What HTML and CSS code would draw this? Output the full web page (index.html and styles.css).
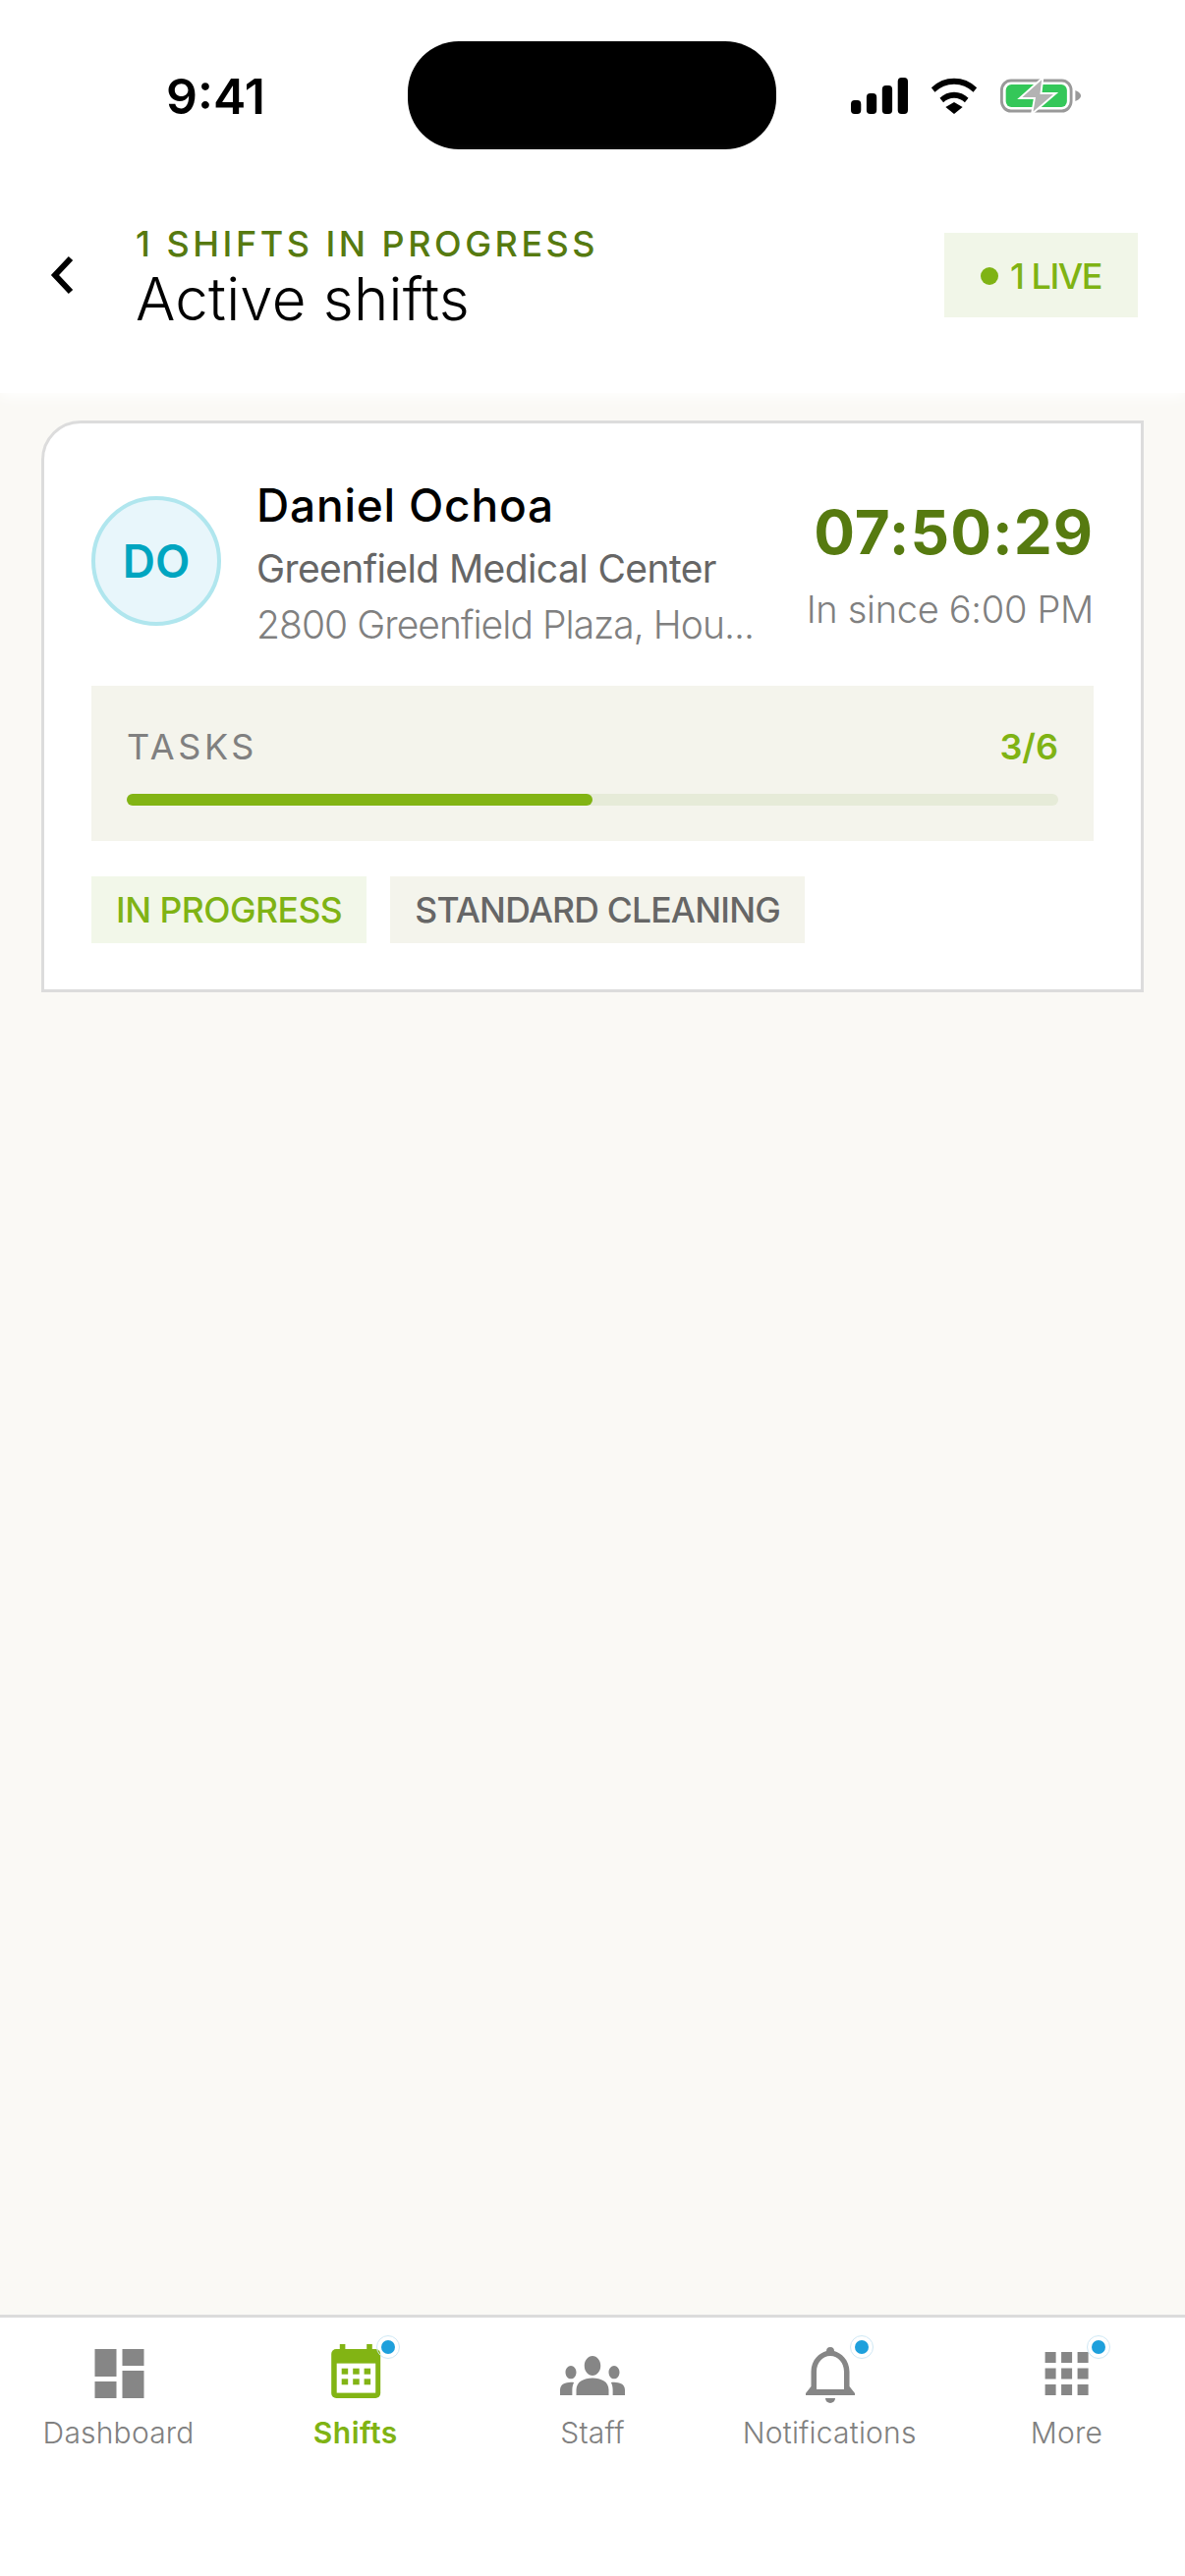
FILE: index.html
```html
<!DOCTYPE html>
<html>
	<head>
		<meta charset="UTF-8">
		<title>Active shifts</title>
		<link rel="stylesheet" href="styles.css">
	</head>
	<body>
		<div class="app">
			<div class="status-bar">
				<div class="status-time">9:41</div>
				<div class="island"></div>
				<div class="status-icons">
					<svg width="58" height="37" viewBox="0 0 62 37" preserveAspectRatio="none" fill="#000">
						<rect x="0" y="23" width="11" height="14" rx="4"/>
						<rect x="17" y="16" width="11" height="21" rx="4"/>
						<rect x="34" y="8" width="11" height="29" rx="4"/>
						<rect x="51" y="0" width="11" height="37" rx="4"/>
					</svg>
					<svg width="50" height="37" viewBox="0 0 55 37" preserveAspectRatio="none">
						<path d="M4 12.5A36 36 0 0 1 51 12.5" fill="none" stroke="#000" stroke-width="6"/>
						<path d="M13.5 23A21 21 0 0 1 41.5 23" fill="none" stroke="#000" stroke-width="6"/>
						<polygon points="18,30 27.5,25 37,30 27.5,37" fill="#000"/>
					</svg>
					<svg width="82" height="39" viewBox="0 0 87 39" preserveAspectRatio="none">
						<rect x="1.5" y="4" width="75" height="31" rx="10" fill="none" stroke="#999" stroke-width="3"/>
						<rect x="6" y="8" width="66" height="23" rx="6" fill="#34c759"/>
						<path d="M81 14C84 15 87 17 87 19.5C87 22 84 24 81 25Z" fill="#999"/>
						<polygon points="46,1 21,22 37,22 34,38 60,17 44,17" fill="#b3b3b3" stroke="#fff" stroke-width="2"/>
					</svg>
				</div>
			</div>

			<div class="header">
				<a class="back">
					<svg width="26" height="40" viewBox="0 0 26 40"><path d="M22 3L6 20L22 37" fill="none" stroke="#000" stroke-width="6"/></svg>
				</a>
				<div class="header-text">
					<div class="header-sub">1 SHIFTS IN PROGRESS</div>
					<div class="header-title">Active shifts</div>
				</div>
				<div class="live"><span class="live-dot"></span>1 LIVE</div>
			</div>

			<div class="main">
				<div class="card">
					<div class="card-top">
						<div class="avatar">DO</div>
						<div class="info">
							<div class="info-name">Daniel Ochoa</div>
							<div class="info-place">Greenfield Medical Center</div>
							<div class="info-addr">2800 Greenfield Plaza, Hou...</div>
						</div>
						<div class="clock">
							<div class="clock-time">07:50:29</div>
							<div class="clock-since">In since 6:00 PM</div>
						</div>
					</div>
					<div class="tasks">
						<div class="tasks-head">
							<span class="tasks-label">TASKS</span>
							<span class="tasks-count">3/6</span>
						</div>
						<div class="bar"><div class="bar-fill" style="width: 50%"></div></div>
					</div>
					<div class="tags">
						<span class="tag tag-green">IN PROGRESS</span>
						<span class="tag">STANDARD CLEANING</span>
					</div>
				</div>
			</div>

			<div class="tabbar">
				<div class="tab">
					<div class="tab-icon">
						<svg width="72" height="60" viewBox="0 0 72 60" fill="#868686">
							<rect x="11.5" y="5" width="22" height="28"/>
							<rect x="11.5" y="38" width="22" height="17"/>
							<rect x="39.5" y="5" width="22" height="17"/>
							<rect x="39.5" y="27" width="22" height="28"/>
						</svg>
					</div>
					<div class="tab-label">Dashboard</div>
				</div>
				<div class="tab tab-active">
					<div class="tab-icon">
						<svg width="72" height="60" viewBox="0 0 72 60" fill="#82b414">
							<rect x="19.8" y="0" width="5.6" height="8"/>
							<rect x="47.2" y="0" width="5.6" height="8"/>
							<rect x="11.2" y="5" width="50" height="50" rx="5"/>
							<rect x="16.7" y="19.6" width="39.5" height="30" fill="#fff"/>
							<rect x="21.7" y="24.7" width="6.5" height="6"/>
							<rect x="33.2" y="24.7" width="6.5" height="6"/>
							<rect x="44.6" y="24.7" width="6.5" height="6"/>
							<rect x="21.7" y="35.3" width="6.5" height="6"/>
							<rect x="33.2" y="35.3" width="6.5" height="6"/>
							<rect x="44.6" y="35.3" width="6.5" height="6"/>
						</svg>
						<span class="badge"></span>
					</div>
					<div class="tab-label">Shifts</div>
				</div>
				<div class="tab">
					<div class="tab-icon">
						<svg width="72" height="60" viewBox="0 0 72 60" fill="#868686">
							<g transform="translate(3 12) scale(2.75 3.33) translate(0 -6)">
								<path d="M12 12.75c1.63 0 3.07.39 4.24.9 1.08.48 1.76 1.56 1.76 2.73V18H6v-1.61c0-1.18.68-2.26 1.76-2.73 1.17-.52 2.61-.91 4.24-.91zM4 13c1.1 0 2-.9 2-2s-.9-2-2-2-2 .9-2 2 .9 2 2 2zm1.13 1.1c-.37-.06-.74-.1-1.13-.1-.99 0-1.93.21-2.78.58C.48 14.9 0 15.62 0 16.43V18h4.5v-1.61c0-.83.23-1.61.63-2.29zM20 13c1.1 0 2-.9 2-2s-.9-2-2-2-2 .9-2 2 .9 2 2 2zm4 3.43c0-.81-.48-1.53-1.22-1.85-.85-.37-1.79-.58-2.78-.58-.39 0-.76.04-1.13.1.4.68.63 1.46.63 2.29V18H24v-1.57zM12 6c1.66 0 3 1.34 3 3s-1.34 3-3 3-3-1.34-3-3 1.34-3 3-3z"/>
							</g>
						</svg>
					</div>
					<div class="tab-label">Staff</div>
				</div>
				<div class="tab">
					<div class="tab-icon">
						<svg width="72" height="60" viewBox="0 0 72 60" fill="#868686">
							<g transform="translate(12 3)">
								<path fill-rule="evenodd" d="M25 0C28 0 29 2 29 4C36 6 44.5 13 44.5 25L44.5 40L50 47L50 49L0 49L0 47L5.5 40L5.5 25C5.5 13 14 6 21 4C21 2 22 0 25 0ZM25 9C17 9 11 16 11 25L11 43L39 43L39 25C39 16 33 9 25 9Z"/>
								<path d="M20 52H30A5 5 0 0 1 20 52Z"/>
							</g>
						</svg>
						<span class="badge"></span>
					</div>
					<div class="tab-label">Notifications</div>
				</div>
				<div class="tab">
					<div class="tab-icon">
						<svg width="72" height="60" viewBox="0 0 72 60" fill="#868686">
							<rect x="14.6" y="8" width="11" height="11"/>
							<rect x="31.1" y="8" width="11" height="11"/>
							<rect x="47.6" y="8" width="11" height="11"/>
							<rect x="14.6" y="24.5" width="11" height="11"/>
							<rect x="31.1" y="24.5" width="11" height="11"/>
							<rect x="47.6" y="24.5" width="11" height="11"/>
							<rect x="14.6" y="41" width="11" height="11"/>
							<rect x="31.1" y="41" width="11" height="11"/>
							<rect x="47.6" y="41" width="11" height="11"/>
						</svg>
						<span class="badge"></span>
					</div>
					<div class="tab-label">More</div>
				</div>
			</div>
		</div>
	</body>
</html>
```

FILE: styles.css
```css
* {margin: 0; padding: 0; box-sizing: border-box;}
body {
	font-family: Inter, "Liberation Sans", sans-serif;
	background: #fff;
}
.app {
	width: 1206px;
	height: 2622px;
	display: flex;
	flex-direction: column;
	overflow: hidden;
}

/* status bar */
.status-bar {
	height: 160px;
	padding: 42px 106px 0 169px;
	display: flex;
	align-items: flex-start;
	background: #fff;
}
.status-time {
	width: 246px;
	height: 110px;
	line-height: 112px;
	font-size: 50px;
	font-weight: 600;
	color: #000;
}
.island {
	width: 375px;
	height: 110px;
	border-radius: 52px;
	background: #000;
}
.status-icons {
	margin-left: auto;
	height: 110px;
	display: flex;
	align-items: center;
	gap: 22px;
}
.status-icons svg {display: block;}

/* header */
.header {
	height: 240px;
	padding: 0 48px 0 50px;
	display: flex;
	align-items: center;
	background: #fff;
	box-shadow: 0 4px 14px #fff;
	position: relative;
}
.back {
	width: 88px;
	display: block;
}
.back svg {display: block;}
.header-text {
	flex: 1;
	padding-top: 3px;
}
.header-sub {
	font-size: 36px;
	line-height: 44px;
	font-weight: 500;
	letter-spacing: 3.5px;
	color: #567a10;
}
.header-title {
	font-size: 60px;
	line-height: 68px;
	font-weight: 300;
	letter-spacing: 0.2px;
	color: #000;
}
.live {
	width: 197px;
	height: 86px;
	padding-top: 2px;
	background: #f1f6e8;
	display: flex;
	align-items: center;
	justify-content: center;
	gap: 12px;
	font-size: 36px;
	font-weight: 500;
	letter-spacing: -1.5px;
	color: #7fb314;
}
.live-dot {
	width: 18px;
	height: 18px;
	border-radius: 50%;
	background: #7fb314;
}

/* card */
.main {
	flex: 1;
	padding: 28px 42px 0;
	background: #faf9f5;
}
.card {
	background: #fff;
	border: 3px solid #dcdcdc;
	border-top-left-radius: 40px;
	padding: 48px 48px 47px;
}
.card-top {
	height: 184px;
	display: flex;
	align-items: flex-start;
}
.avatar {
	width: 132px;
	height: 132px;
	margin-top: 26px;
	margin-right: 36px;
	flex-shrink: 0;
	border-radius: 50%;
	border: 4px solid #b0e6ee;
	background: #e8f6fb;
	color: #00a5c0;
	font-size: 46px;
	font-weight: 600;
	display: flex;
	align-items: center;
	justify-content: center;
}
.info {
	flex: 1;
	min-width: 0;
}
.info-name {
	font-size: 46px;
	line-height: 70px;
	font-weight: 500;
	letter-spacing: 0.8px;
	color: #000;
}
.info-place {
	font-size: 39px;
	line-height: 60px;
	letter-spacing: -0.6px;
	white-space: nowrap;
	color: #666;
}
.info-addr {
	font-size: 39px;
	line-height: 54px;
	font-weight: 300;
	letter-spacing: -0.95px;
	color: #808080;
	white-space: nowrap;
}
.clock {
	padding-top: 23px;
	text-align: right;
	flex-shrink: 0;
}
.clock-time {
	font-size: 62px;
	line-height: 80px;
	font-weight: 700;
	letter-spacing: 1px;
	color: #567a10;
}
.clock-since {
	font-size: 38px;
	line-height: 76px;
	font-weight: 300;
	letter-spacing: -0.3px;
	color: #808080;
}

/* tasks */
.tasks {
	margin-top: 35px;
	padding: 40px 36px 36px;
	background: #f4f4ec;
}
.tasks-head {
	display: flex;
	justify-content: space-between;
	line-height: 44px;
	font-size: 36px;
}
.tasks-label {
	letter-spacing: 3.6px;
	color: #808080;
}
.tasks-count {
	font-weight: 600;
	color: #7fb314;
}
.bar {
	height: 12px;
	margin-top: 26px;
	border-radius: 6px;
	background: #e6ebd8;
}
.bar-fill {
	height: 12px;
	border-radius: 6px;
	background: #82b414;
}

/* tags */
.tags {
	margin-top: 36px;
	display: flex;
	gap: 24px;
}
.tag {
	height: 68px;
	line-height: 70px;
	padding: 0 25px;
	background: #f4f4ec;
	font-size: 35.5px;
	font-weight: 500;
	letter-spacing: -0.8px;
	color: #666;
}
.tag-green {
	letter-spacing: -0.5px;
	background: #f2f7e9;
	color: #7fb314;
}

/* bottom tabs */
.tabbar {
	height: 266px;
	border-top: 3px solid #dcdcdc;
	background: #fff;
	display: flex;
}
.tab {
	flex: 1;
	padding-top: 27px;
	display: flex;
	flex-direction: column;
	align-items: center;
}
.tab-icon {
	width: 72px;
	height: 60px;
	position: relative;
}
.tab-icon svg {display: block;}
.badge {
	position: absolute;
	left: 57px;
	top: -9px;
	width: 24px;
	height: 24px;
	padding: 4px;
	border-radius: 50%;
	border: 1px solid #cfe8f5;
	background: #1ea0dc content-box;
}
.tab-label {
	margin-top: 13px;
	font-size: 30px;
	line-height: 34px;
	font-weight: 300;
	letter-spacing: 0.2px;
	color: #808080;
}
.tab-active .tab-label {
	font-weight: 600;
	letter-spacing: 0.5px;
	color: #7fb314;
}
```
